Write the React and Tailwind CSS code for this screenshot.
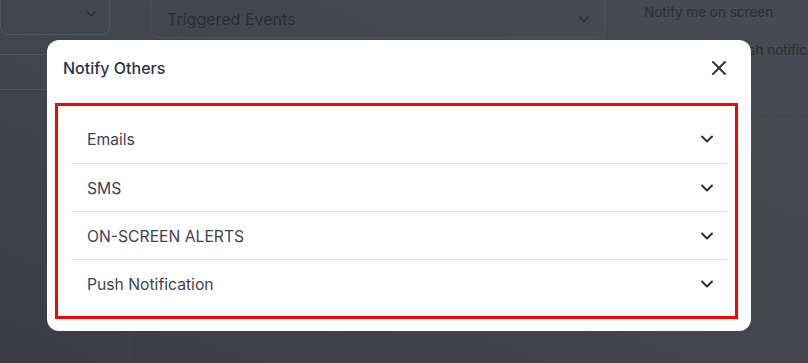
import { ChevronDown, X } from 'lucide-react';

const CHANNELS = ['Emails', 'SMS', 'ON-SCREEN ALERTS', 'Push Notification'];

function Backdrop() {
  return (
    <div className="flex h-full w-full text-[#2a2d33]">
      {/* left column */}
      <div className="flex w-[130px] shrink-0 flex-col border-r border-[#41444b]">
        <div className="-mt-2 flex h-[43px] w-[110px] items-center justify-end rounded-b-lg border border-[#51555d] pr-[10px]">
          <ChevronDown size={16} strokeWidth={2} className="text-[#2a2d33]" />
        </div>
        <div className="mt-[19px] h-[36px] w-[130px] border-y border-[#51555d]" />
      </div>
      {/* middle column */}
      <div className="w-5 shrink-0" />
      <div className="flex h-full w-[457px] shrink-0 flex-col border-r border-[#41444b]">
        <div className="-mt-2 flex h-[46px] items-center justify-between rounded-b-lg border border-[#4c5058] pl-4 pr-[12px] pt-2">
          <span className="text-[16px]">Triggered Events</span>
          <ChevronDown size={18} strokeWidth={2} className="text-[#2a2d33]" />
        </div>
      </div>
      {/* right column */}
      <div className="flex flex-1 flex-col pl-[37px] text-[13.5px]">
        <div className="pt-[2px]">Notify me on screen</div>
        <div className="whitespace-nowrap pt-[18px]">Notify me via push notification</div>
        <div className="mt-[54px] border-t border-dashed border-[#3f4249]" />
      </div>
    </div>
  );
}

export default function App() {
  return (
    <div
      className="relative h-[363px] w-[808px] overflow-hidden bg-gradient-to-tr from-[#3a3d44] via-[#43464d] to-[#484b53]"
      style={{ fontFamily: 'Inter, "Noto Sans", sans-serif' }}
    >
      <Backdrop />

      {/* modal */}
      <div className="absolute left-[47px] top-[40px] flex w-[704px] flex-col rounded-xl bg-white">
        <div className="flex h-14 items-center justify-between pl-4 pr-5">
          <h2 className="text-[16px] font-medium text-[#2c3349]">Notify Others</h2>
          <X size={24} strokeWidth={2} className="text-[#2c3349]" />
        </div>

        <div className="px-6 pb-6 pt-[19px]">
          <div className="relative">
            {CHANNELS.map((label, i) => (
              <div
                key={label}
                className={`flex h-12 items-center justify-between pl-4 pr-[10px] ${i > 0 ? 'border-t border-[#e2e2e2]' : ''}`}
              >
                <span className="pt-[2px] text-[15.7px] text-[#3d4350]">{label}</span>
                <ChevronDown size={20} strokeWidth={2.5} className="text-[#2c3349]" />
              </div>
            ))}
            {/* highlight outline */}
            <div className="pointer-events-none absolute -bottom-3 -left-4 -right-[11px] -top-3 border-[3px] border-[#ff0000]" />
          </div>
        </div>
      </div>
    </div>
  );
}
